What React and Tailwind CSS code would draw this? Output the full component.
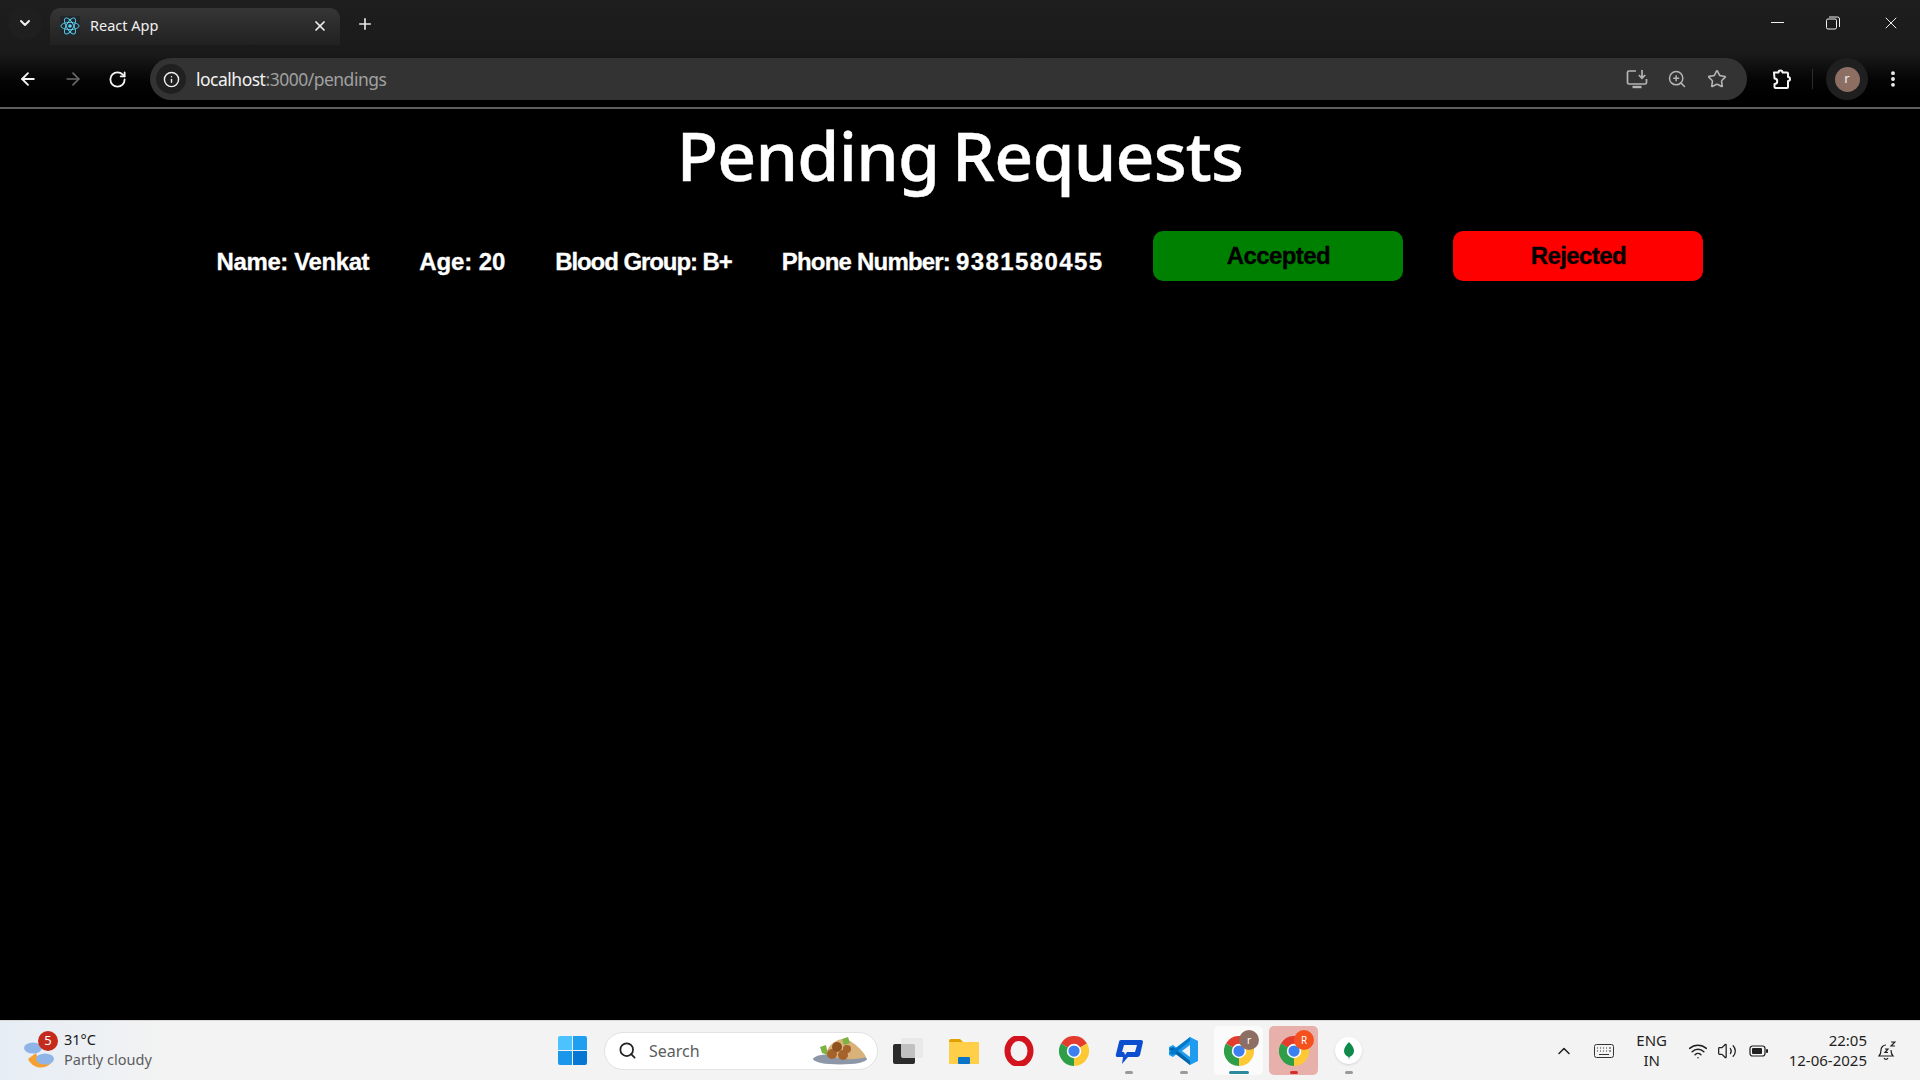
import React from "react";
import { ArrowLeft, ArrowRight, RotateCw, ChevronDown, X, Plus, Info, ZoomIn, Star, MoreVertical, Search, ChevronUp, Wifi, Volume2 } from "lucide-react";

const ui = "font-['Noto_Sans','Open_Sans',sans-serif]";

function ReactLogo() {
  return (
    <svg width="20" height="20" viewBox="-11 -11 22 22" fill="none" stroke="#5ed3f3" strokeWidth="1">
      <circle r="2" fill="#5ed3f3" stroke="none" />
      <ellipse rx="10" ry="4" />
      <ellipse rx="10" ry="4" transform="rotate(60)" />
      <ellipse rx="10" ry="4" transform="rotate(120)" />
    </svg>
  );
}

function ChromeIcon({ size = 30 }) {
  return (
    <svg width={size} height={size} viewBox="0 0 48 48">
      <path d="M24 24 L44.8 12 A24 24 0 0 0 3.2 12 Z" fill="#e33b2e" />
      <path d="M24 24 L3.2 12 A24 24 0 0 0 24 48 Z" fill="#2f9e48" />
      <path d="M24 24 L24 48 A24 24 0 0 0 44.8 12 Z" fill="#fcc934" />
      <circle cx="24" cy="24" r="11.5" fill="#fff" />
      <circle cx="24" cy="24" r="9" fill="#3c7ff0" />
    </svg>
  );
}

function RestoreIcon() {
  return (
    <svg width="14" height="14" viewBox="0 0 14 14" fill="none" stroke="#f0f0f0" strokeWidth="1">
      <rect x="0.5" y="3" width="10" height="10" rx="1.5" />
      <path d="M3 1h8.5a2 2 0 0 1 2 2v8" />
    </svg>
  );
}

function InstallIcon() {
  return (
    <svg width="22" height="20" viewBox="0 0 22 20" fill="none" stroke="#b5b5b5" strokeWidth="1.7">
      <path d="M10 2H3a1.5 1.5 0 0 0-1.5 1.5v10A1.5 1.5 0 0 0 3 15h16a1.5 1.5 0 0 0 1.5-1.5V10" />
      <path d="M16 1v8M12.8 6l3.2 3.2L19.2 6" />
      <path d="M6.5 18h9" strokeWidth="2.4" />
    </svg>
  );
}

function ExtensionIcon() {
  return (
    <svg width="22" height="22" viewBox="0 0 22 22" fill="none" stroke="#f5f5f5" strokeWidth="2" strokeLinejoin="round">
      <path d="M3 4.5h4.5a2 2 0 0 1 4 0H16a1 1 0 0 1 1 1v3.5a2 2 0 0 1 0 4V19a1 1 0 0 1-1 1H4.5a1 1 0 0 1-1-1v-3a2.5 2.5 0 0 0 0-5.5Z" />
    </svg>
  );
}

function TabStrip() {
  return (
    <div className="flex h-[45px] items-end">
      <div className="flex h-[45px] w-[50px] items-center justify-center">
        <div className="flex h-[34px] w-[34px] items-center justify-center rounded-full bg-[#1f1f1f]">
          <ChevronDown size={16} strokeWidth={3} color="#f0f0f0" />
        </div>
      </div>
      <div className="flex h-[37px] w-[290px] items-center rounded-t-[10px] bg-gradient-to-b from-[#363636] to-[#212121] pb-[2px] pl-[10px] pr-[12px]">
        <div className="flex h-[20px] w-[20px] items-center justify-center bg-[#20262a]"><ReactLogo /></div>
        <span className="ml-[10px] flex-1 text-[14.5px] text-[#f0f0f0]">React App</span>
        <X size={16} strokeWidth={2.6} color="#f0f0f0" />
      </div>
      <div className="flex h-[45px] w-[50px] items-center justify-center pt-[2px]">
        <Plus size={18} strokeWidth={2.2} color="#e8e8e8" />
      </div>
      <div className="flex h-[45px] flex-1 items-center justify-end pr-[19px]">
        <div className="h-px w-[13px] bg-[#f0f0f0]" />
        <div className="ml-[42px]"><RestoreIcon /></div>
        <div className="ml-[41px]"><X size={20} strokeWidth={1.2} color="#f0f0f0" /></div>
      </div>
    </div>
  );
}

function Toolbar() {
  return (
    <div className="flex h-[62px] items-start pt-[13px]">
      <div className="flex h-[42px] w-[150px] items-center pl-[18px]">
        <ArrowLeft size={20} strokeWidth={2.2} color="#f5f5f5" />
        <div className="ml-[25px]"><ArrowRight size={20} strokeWidth={2} color="#6b6b6b" /></div>
        <div className="ml-[25px]"><RotateCw size={19} strokeWidth={2.3} color="#f5f5f5" /></div>
      </div>
      <div className="flex h-[42px] w-[1597px] items-center rounded-full bg-[#333333] pl-[6px] pr-[20px]">
        <div className="flex h-[30px] w-[30px] items-center justify-center rounded-full bg-[#202020]">
          <Info size={17} strokeWidth={2} color="#f0f0f0" />
        </div>
        <span className="ml-[10px] flex-1 text-[17.5px] tracking-[-0.5px]">
          <span className="text-[#f2f2f2]">localhost</span>
          <span className="text-[#a0a0a0]">:3000/pendings</span>
        </span>
        <InstallIcon />
        <div className="ml-[19px]"><ZoomIn size={20} strokeWidth={1.8} color="#b5b5b5" /></div>
        <div className="ml-[20px]"><Star size={20} strokeWidth={1.9} color="#b5b5b5" /></div>
      </div>
      <div className="flex h-[42px] flex-1 items-center pl-[24px]">
        <ExtensionIcon />
        <div className="ml-[19px] h-[20px] w-px bg-[#2c2c2c]" />
        <div className="ml-[13px] flex h-[42px] w-[42px] items-center justify-center rounded-full bg-[#1f1f1f]">
          <div className="flex h-[25px] w-[25px] items-center justify-center rounded-full bg-[#8d6e63] text-[13px] text-[#f0f0f0]">r</div>
        </div>
        <div className="ml-[15px]"><MoreVertical size={20} strokeWidth={2.6} color="#f5f5f5" /></div>
      </div>
    </div>
  );
}

function Chrome() {
  return (
    <header className={`${ui} bg-gradient-to-b from-[#1e1e1e] via-[#1a1a1a] to-[#000000]`}>
      <TabStrip />
      <Toolbar />
      <div className="h-[2px] bg-[#5f5f5f]" />
    </header>
  );
}

function Main() {
  return (
    <main className="flex flex-1 flex-col items-center bg-black text-white">
      <h1 className="mt-[6px] h-[80px] text-[68px] font-medium leading-[80px] font-['Noto_Sans',sans-serif] tracking-[-0.85px] [word-spacing:-4px] [-webkit-text-stroke:0.4px]">Pending Requests</h1>
      <div className="mt-[36px] flex items-start gap-[50px] font-['Liberation_Sans',sans-serif] text-[24px] font-bold [-webkit-text-stroke:0.3px]">
        <span className="mt-[17px] leading-[28px] tracking-[-0.4px]">Name: Venkat</span>
        <span className="mt-[17px] leading-[28px] tracking-[-0.1px]">Age: 20</span>
        <span className="mt-[17px] leading-[28px] tracking-[-1.07px]">Blood Group: B+</span>
        <span className="mt-[17px] leading-[28px]">
          <span className="tracking-[-0.8px]">Phone Number: </span>
          <span className="tracking-[1.4px]">9381580455</span>
        </span>
        <button className="h-[50px] w-[250px] rounded-[10px] bg-[#008000] text-black tracking-[-0.6px]">Accepted</button>
        <button className="h-[50px] w-[250px] rounded-[10px] bg-[#ff0000] text-black tracking-[-0.6px]">Rejected</button>
      </div>
    </main>
  );
}

function Weather() {
  return (
    <div className="flex h-full w-[558px] items-center bg-gradient-to-r from-[#e6edf5] to-[#f3f3f3] to-30% pl-[24px]">
      <div className="relative h-[36px] w-[36px]">
        <svg width="34" height="36" viewBox="0 0 34 36">
          <path d="M4 26a14 14 0 0 0 24 3A12 12 0 0 1 12 20Z" fill="#f5a030" />
          <ellipse cx="9" cy="15" rx="9" ry="5.5" fill="#8fb5e8" />
          <ellipse cx="21" cy="26" rx="9" ry="5.5" fill="#8fb5e8" />
        </svg>
        <div className="absolute left-[14px] top-[-2px] flex h-[20px] w-[20px] items-center justify-center rounded-full bg-[#c42b1c] text-[13px] text-white">5</div>
      </div>
      <div className="mb-[4px] ml-[4px] text-[14.5px] leading-[20px]">
        <div className="text-[#1a1a1a]">31°C</div>
        <div className="text-[#5c5c5c]">Partly cloudy</div>
      </div>
    </div>
  );
}

function WinLogo() {
  return (
    <div className="grid h-[29px] w-[29px] grid-cols-2 gap-[1px]">
      <div className="rounded-tl-[2px] bg-[#4cc2ff]" />
      <div className="rounded-tr-[2px] bg-[#1f9ff0]" />
      <div className="rounded-bl-[2px] bg-[#1a96ea]" />
      <div className="rounded-br-[2px] bg-[#0678d4]" />
    </div>
  );
}

function FoodIcon() {
  return (
    <svg width="56" height="28" viewBox="0 0 56 28">
      <ellipse cx="28" cy="22" rx="27" ry="5.5" fill="#8d97a8" />
      <path d="M14 16C18 4 30 0 36 3c6 3 14 9 18 17-8 3-30 4-40-4Z" fill="#d9b27a" />
      <path d="M8 10l6-2 2 10-6-2Z" fill="#7cb342" />
      <path d="M30 2l6-2 2 6-6 2Z" fill="#7cb342" />
      <circle cx="20" cy="17" r="5" fill="#a5622a" />
      <circle cx="31" cy="18" r="5" fill="#a5622a" />
      <circle cx="25" cy="10" r="5" fill="#8f5220" />
      <circle cx="35" cy="12" r="4" fill="#a5622a" />
    </svg>
  );
}

function Slot({ children, pip, active, tint, pipClass }) {
  return (
    <div className={`relative flex h-[49px] w-[49px] items-center justify-center rounded-[5px] ${active ? "bg-[#fbfbfb]" : ""} ${tint ? "bg-[#e8b0ab]" : ""}`}>
      {children}
      {pip && <div className={`absolute bottom-[1px] h-[3px] rounded-full ${pipClass}`} />}
    </div>
  );
}

function Badge({ className, children }) {
  return <div className={`absolute left-[25px] top-[4px] flex h-[20px] w-[20px] items-center justify-center rounded-full text-[10px] text-white ${className}`}>{children}</div>;
}

function CenterTray() {
  return (
    <div className="flex h-full items-center">
      <WinLogo />
      <div className="ml-[17px] flex h-[38px] w-[274px] items-center rounded-full border border-[#e2e2e2] bg-white pl-[13px] pr-[9px]">
        <Search size={19} strokeWidth={2.2} color="#222222" />
        <span className="ml-[12px] flex-1 text-[16px] text-[#5c5c5c]">Search</span>
        <FoodIcon />
      </div>
      <div className="relative ml-[15px] h-[26px] w-[30px]">
        <div className="absolute bottom-0 left-0 h-[20px] w-[22px] rounded-[2px] bg-[#2b2b2b]" />
        <div className="absolute right-0 top-0 h-[20px] w-[22px] rounded-[2px] bg-[#e6e6e6]/80" />
      </div>
      <div className="ml-[16px] flex items-center gap-[6px]">
        <Slot>
          <svg width="30" height="26" viewBox="0 0 30 26">
            <path d="M0 3a2 2 0 0 1 2-2h9l3 3h-14Z" fill="#e2a100" />
            <rect y="4" width="30" height="22" rx="1" fill="#ffcf49" />
            <rect x="9" y="19" width="12" height="7" rx="1" fill="#0a74c8" />
          </svg>
        </Slot>
        <Slot>
          <svg width="30" height="30" viewBox="0 0 30 30">
            <ellipse cx="15" cy="15" rx="11.5" ry="13" fill="none" stroke="#d3141f" strokeWidth="6" />
          </svg>
        </Slot>
        <Slot><ChromeIcon /></Slot>
        <Slot pip pipClass="w-[8px] bg-[#9a9a9a]">
          <svg width="30" height="28" viewBox="0 0 30 28" fill="none">
            <path d="M7 3h20a2 2 0 0 1 2 2l-3 13a3 3 0 0 1-3 2h-9l-6 7 1-7H4a2 2 0 0 1-2-3L5 5a2 2 0 0 1 2-2Z" fill="#0b4fd0" />
            <path d="M10 8h13l-2 7h-8l-2 3-1-3h-2Z" fill="#f3f3f3" />
          </svg>
        </Slot>
        <Slot pip pipClass="w-[8px] bg-[#9a9a9a]">
          <svg width="30" height="30" viewBox="0 0 30 30">
            <path d="M21 1l8 4v20l-8 4-12-12-5 4-4-2V11l4-2 5 4Z" fill="#1f9cf0" />
            <path d="M21 9l-8 6 8 6Z" fill="#f3f3f3" />
            <path d="M4 11l17 14v4L0 13Z" fill="#0065a9" />
            <path d="M4 19l17-14V1L0 17Z" fill="#007acc" />
          </svg>
        </Slot>
        <Slot active pip pipClass="w-[20px] bg-[#2a8a9e]">
          <ChromeIcon />
          <Badge className="bg-[#8d6e63]">r</Badge>
        </Slot>
        <Slot tint pip pipClass="w-[8px] bg-[#d32f2f]">
          <ChromeIcon />
          <Badge className="bg-[#f4511e]">R</Badge>
        </Slot>
        <Slot pip pipClass="w-[8px] bg-[#9a9a9a]">
          <div className="flex h-[27px] w-[27px] items-center justify-center rounded-full bg-white shadow-sm">
            <svg width="10" height="18" viewBox="0 0 10 18"><path d="M5 0c3 3 5 6 5 9s-2 5-4.5 6L5 18l-.5-3C2 14 0 12 0 9s2-6 5-9Z" fill="#0f8a4a" /></svg>
          </div>
        </Slot>
      </div>
    </div>
  );
}

function KeyboardIcon() {
  return (
    <svg width="20" height="14" viewBox="0 0 20 14" fill="none" stroke="#333333" strokeWidth="1">
      <rect x="0.5" y="0.5" width="19" height="13" rx="2" />
      <path d="M3 4h1M6 4h1M9 4h1M12 4h1M15 4h2M3 7h1M6 7h1M9 7h1M12 7h1M15 7h2M5 10.5h10" />
    </svg>
  );
}

function RightTray() {
  return (
    <div className="ml-auto flex h-full items-center pr-[24px] text-[15px] text-[#1f1f1f]">
      <ChevronUp size={20} strokeWidth={1.8} color="#1f1f1f" />
      <div className="ml-[20px]"><KeyboardIcon /></div>
      <div className="ml-[22px] mb-[1px] w-[32px] text-center leading-[20px]">ENG<br />IN</div>
      <div className="ml-[20px]"><Wifi size={20} strokeWidth={1.8} color="#1f1f1f" /></div>
      <div className="ml-[9px]"><Volume2 size={20} strokeWidth={1.5} color="#1f1f1f" /></div>
      <div className="ml-[12px]">
        <svg width="20" height="14" viewBox="0 0 20 14" fill="none">
          <rect x="1" y="2" width="15" height="10" rx="2.5" stroke="#1f1f1f" strokeWidth="1.2" />
          <rect x="3" y="4" width="10" height="6" rx="1" fill="#1f1f1f" />
          <rect x="17" y="5" width="2" height="4" rx="1" fill="#1f1f1f" />
        </svg>
      </div>
      <div className="ml-[20px] mb-[2px] text-right leading-[20px]">22:05<br />12-06-2025</div>
      <div className="ml-[11px]">
        <svg width="18" height="20" viewBox="0 0 18 20" fill="none" stroke="#1f1f1f" strokeWidth="1.2">
          <path d="M8 4a5 5 0 0 0-5 5c0 3-1 5-2 6h14c-1-1-2-3-2-6" />
          <path d="M6 17a2.2 2.2 0 0 0 4 0" />
          <path d="M7 8h3l-3 3.5h3M13 1h4l-4 4h4" />
        </svg>
      </div>
    </div>
  );
}

function Taskbar() {
  return (
    <footer className={`${ui} flex h-[60px] items-center border-t border-[#d8d8d8] bg-[#f3f3f3]`}>
      <Weather />
      <CenterTray />
      <RightTray />
    </footer>
  );
}

export default function App() {
  return (
    <div className="flex h-[1080px] w-[1920px] flex-col overflow-hidden bg-black">
      <Chrome />
      <Main />
      <Taskbar />
    </div>
  );
}
